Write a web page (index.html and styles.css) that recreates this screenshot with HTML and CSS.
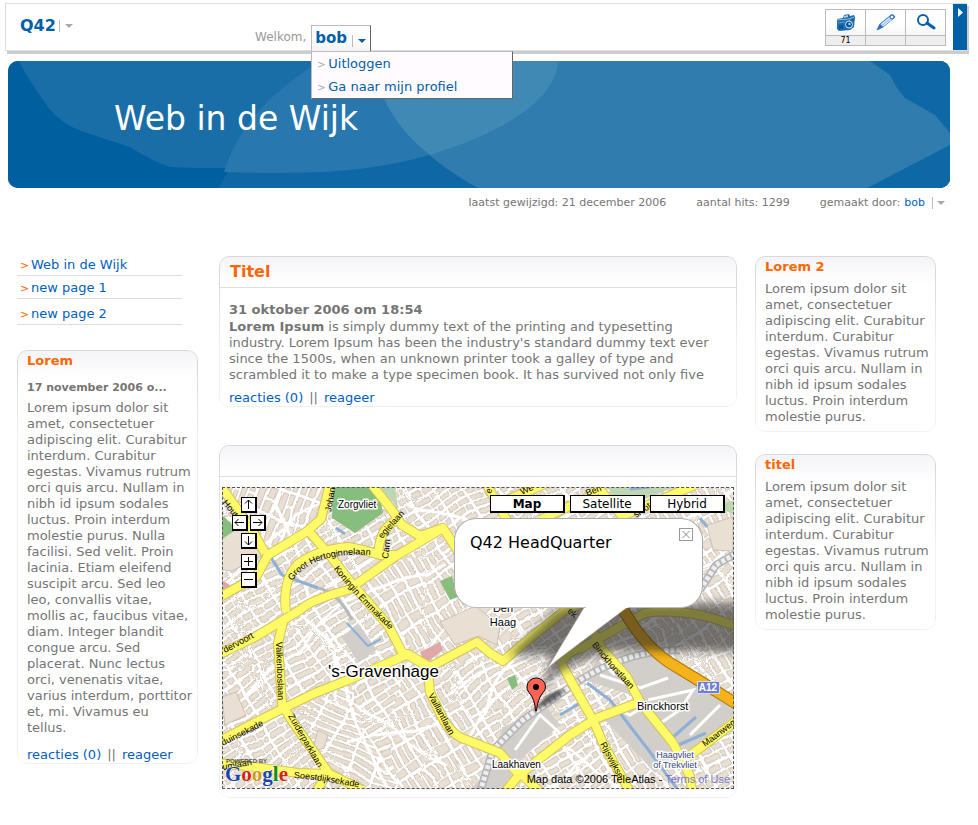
FILE: index.html
```html
<!DOCTYPE html>
<html lang="nl">
<head>
<meta charset="utf-8">
<title>Web in de Wijk</title>
<link rel="stylesheet" href="styles.css">
</head>
<body>
<header class="topbar">
  <div class="brand"><a href="#">Q42</a><span class="sep"></span><i class="caret"></i></div>
  <div class="welcome">
    <span class="hello">Welkom,</span>
    <div class="user">
      <button class="user-tab" type="button">bob<span class="sep"></span><i class="caret blue"></i></button>
      <ul class="user-menu">
        <li><a href="#">Uitloggen</a></li>
        <li><a href="#">Ga naar mijn profiel</a></li>
      </ul>
    </div>
  </div>
  <div class="tools">
    <button class="tool" type="button" aria-label="Foto's">
      <svg width="20" height="18" viewBox="0 0 20 18"><path d="M1 5l6-1 1-3 5-1 1 2 4-1 1 2-1 10-4 3-11 1-2-2z" fill="#1d6cae"/><path d="M1 6l12-1 5-2" stroke="#8fc0e8" fill="none"/><path d="M2 9l7-1M13 5l1 3" stroke="#5d9fd6" fill="none"/><path d="M8 2l4-1v2l-4 1z" fill="#a9cdea"/><path d="M3 11h4v4H3z" fill="#0b559c"/><circle cx="13" cy="10.500" r="3.500" fill="#0b559c" stroke="#d5e8f8"/><circle cx="13.500" cy="10" r="1.200" fill="#b5d7f2"/></svg>
      <span>71</span>
    </button>
    <button class="tool" type="button" aria-label="Bewerken">
      <svg width="20" height="18" viewBox="0 0 20 18"><path d="M1 16l3-6L15 1q3-1 4 2L7 13z" fill="#a9cbf5" stroke="#3b7cc4"/><path d="M1 16l3-6 3 3z" fill="#2b6fb8"/><path d="M6 10l9-7M7 12l9-7" stroke="#e8f2ff"/><circle cx="16" cy="3" r="2" fill="#fff" stroke="#0b60b0"/></svg>
      <span></span>
    </button>
    <button class="tool" type="button" aria-label="Zoeken">
      <svg width="20" height="18" viewBox="0 0 20 18"><circle cx="7" cy="6" r="5" fill="#fff" stroke="#0b5fae" stroke-width="2"/><path d="M11 9l7 5" stroke="#0b5fae" stroke-width="3" stroke-linecap="round"/></svg>
      <span></span>
    </button>
  </div>
  <button class="collapse" type="button" aria-label="Inklappen"><svg width="5" height="9" viewBox="0 0 5 9"><path d="M0 0l5 4.500-5 4.500z" fill="#fff"/></svg></button>
</header>

<section class="hero">
  <svg class="hero-art" viewBox="8 61 942 127" preserveAspectRatio="none" aria-hidden="true">
    <path fill="#005f9f" d="M8 61H950V188H8z"/>
    <path fill="#0f68a6" d="M218 188L232 165 500 61H950V188z"/>
    <path fill="#1a6ea7" d="M19 61C26 75 38 93 48 107Q62 125 84 132Q105 139 130 147Q150 160 170 167L195 168 232 168 420 61z"/>
    <path fill="#2877ae" d="M224 172C236 133 262 98 320 61H558C558 88 520 118 430 155C370 171 325 175 224 172z"/>
    <path fill="#307cae" d="M374 61C378 110 418 155 478 188H867L950 145V133L935 115 905 98 897 88 890 75 870 61z"/>
    <path fill="#4189b5" d="M374 61C377 95 397 130 430 155C508 131 556 98 558 61z"/>
  </svg>
  <h1>Web in de Wijk</h1>
</section>
<div class="meta">
  <span>laatst gewijzigd: 21 december 2006</span>
  <span>aantal hits: 1299</span>
  <span class="author">gemaakt door: <a href="#">bob</a><span class="sep"></span><i class="caret"></i></span>
</div>

<main class="columns">
  <aside class="side">
    <nav class="pages">
      <a href="#">Web in de Wijk</a>
      <a href="#">new page 1</a>
      <a href="#" class="roomy">new page 2</a>
    </nav>
    <article class="card">
      <h2>Lorem</h2>
      <h3 class="date">17 november 2006 o...</h3>
      <p>Lorem ipsum dolor sit amet, consectetuer adipiscing elit. Curabitur interdum. Curabitur egestas. Vivamus rutrum orci quis arcu. Nullam in nibh id ipsum sodales luctus. Proin interdum molestie purus. Nulla facilisi. Sed velit. Proin lacinia. Etiam eleifend suscipit arcu. Sed leo<br>leo, convallis vitae,<br>mollis ac, faucibus vitae,<br>diam. Integer blandit<br>congue arcu. Sed<br>placerat. Nunc lectus<br>orci, venenatis vitae,<br>varius interdum, porttitor<br>et, mi. Vivamus eu<br>tellus.</p>
      <div class="links"><a href="#">reacties (0)</a><span>||</span><a href="#">reageer</a></div>
    </article>
  </aside>

  <div class="center">
    <article class="card wide">
      <h2>Titel</h2>
      <h3>31 oktober 2006 om 18:54</h3>
      <p><b>Lorem Ipsum</b> is simply dummy text of the printing and typesetting industry. Lorem Ipsum has been the industry's standard dummy text ever since the 1500s, when an unknown printer took a galley of type and scrambled it to make a type specimen book. It has survived not only five</p>
      <div class="links"><a href="#">reacties (0)</a><span>||</span><a href="#">reageer</a></div>
    </article>

    <article class="card wide map-card">
      <h2></h2>
      <div class="map">
        <svg class="map-art" viewBox="222 487 512 302" preserveAspectRatio="xMidYMid slice">
          <defs>
            <pattern id="pa" width="27" height="17" patternUnits="userSpaceOnUse" patternTransform="rotate(-32)">
              <path fill="#fff" d="M0 0h27v17H0z"/><path fill="#e9dfd3" stroke="#c8bdae" stroke-width=".8" d="M1.500 1.500h10v5h-10zM14 1.500h10.500v5h-10.500zM1.500 9.500h15.500v5h-15.500zM19.500 9.500h5v5h-5z"/>
            </pattern>
            <pattern id="pb" width="17" height="30" patternUnits="userSpaceOnUse" patternTransform="rotate(20)">
              <path fill="#fff" d="M0 0h17v30H0z"/><path fill="#e9dfd3" stroke="#c8bdae" stroke-width=".8" d="M1.500 1.500h5v26h-5zM9.500 1.500h5v11h-5zM9.500 16h5v11.500h-5z"/>
            </pattern>
            <pattern id="pc" width="31" height="16" patternUnits="userSpaceOnUse" patternTransform="rotate(58)">
              <path fill="#fff" d="M0 0h31v16H0z"/><path fill="#e9dfd3" stroke="#c8bdae" stroke-width=".8" d="M1.500 1.500h17v4h-17zM21 1.500h7.500v12h-7.500zM1.500 8.500h17v5h-17z"/>
            </pattern>
            <pattern id="pd" width="25" height="14" patternUnits="userSpaceOnUse" patternTransform="rotate(24)">
              <path fill="#fff" d="M0 0h25v14H0z"/><path fill="#e9dfd3" stroke="#c8bdae" stroke-width=".8" d="M1.500 1.500h21v4h-21zM1.500 8.500h21v3.500h-21z"/>
            </pattern>
            <filter id="warp" x="0" y="0" width="1" height="1"><feTurbulence baseFrequency=".014" numOctaves="1" seed="5"/><feDisplacementMap in="SourceGraphic" scale="14" xChannelSelector="R" yChannelSelector="G"/></filter>
            <filter id="soft" x="-20%" y="-50%" width="140%" height="200%"><feGaussianBlur stdDeviation="4"/></filter>
            <filter id="soft2" x="-50%" y="-50%" width="200%" height="200%"><feGaussianBlur stdDeviation="1.500"/></filter>
            <g id="roads">
              <path d="M222 488L238 510 252 530 265 553"/>
              <path d="M218 598L256 577 268 555 306 532 321 519 331 480"/>
              <path d="M307 529L332 558 352 584 388 625 402 652 427 666"/>
              <path d="M286 612Q282 580 298 564Q318 549 348 547Q362 549 380 555H396"/>
              <path d="M218 655L255 637 300 610Q310 600 348 590L396 556 423 540 443 528 456 548 470 580"/>
              <path d="M368 480L392 510 402 525 420 536 443 528"/><path d="M398 520Q380 526 378 555"/>
              <path d="M484 480L508 522"/><path d="M495 505L545 484"/><path d="M540 520L593 495 600 480"/><path d="M598 487L622 516 695 485"/>
              <path d="M284 618L278 643 282 704 290 718 328 772 316 792"/>
              <path d="M218 742L252 724 284 708 315 693 348 680 395 660 408 654 430 667 477 642 490 653 503 661 533 636 564 611 588 601"/>
              <path d="M218 763L255 767 298 773 330 774 362 790"/>
              <path d="M427 663L430 692 440 713Q450 735 467 740L500 753 519 775 570 735 597 718 640 702"/>
              <path d="M519 775L505 792"/><path d="M519 772L540 792"/>
              <path d="M560 665Q567 650 582 648L612 631 645 613Q690 607 738 627"/>
              <path d="M562 665L593 720 603 743 630 792"/>
              <path d="M592 630L603 650 627 677 640 702 673 743 690 776 692 790"/><path d="M684 760L740 718"/>
            </g>
            <path id="groot" d="M292 581Q308 558 348 555Q365 553 395 559"/>
            <path id="emma" d="M334 569Q350 591 395 635"/>
            <path id="soest" d="M294 778Q325 780 370 790"/>
            <path id="binck" d="M592 645Q606 665 640 699"/>
          </defs>
          <g filter="url(#warp)">
            <path fill="url(#pa)" d="M200 465H760V810H200z"/>
            <path fill="url(#pb)" d="M265 475H325L318 525 265 548 222 480z"/>
            <path fill="url(#pc)" d="M455 545L520 655 427 665 352 583 400 555z"/>
            <path fill="url(#pc)" d="M430 665L500 755 515 800H395L380 725 400 660z"/>
            <path fill="url(#pd)" d="M290 700L345 682 360 730 395 790H345z"/>
            <path fill="url(#pc)" d="M650 475H755V700L640 635zM600 720L640 720 675 790H625z"/>
            <path fill="none" stroke="#fff" stroke-width="3" d="M222 580L290 510 330 490M240 690L300 640 340 600 440 560M325 630L350 720 385 790M300 610L330 640 330 700M400 660L470 600 540 570M440 690L540 640M460 735L520 640 500 590M350 700L440 760M340 740L430 720M640 540L734 480M650 590L734 540M560 740L620 790M540 790L585 745M400 500L480 520M270 500L300 560"/>
          </g>
          <path fill="#eadfd3" stroke="#c4b8a8" stroke-width=".8" d="M222 537L240 528 262 555 232 571 222 570zM222 697L236 692 246 715 225 725zM440 622L475 606 500 625 497 645 478 636 455 645zM707 525L733 517 733 551 713 550zM318 730L328 735 324 748 312 752z"/>
          <path fill="#d2cfca" d="M342 637L358 623 377 650 358 662zM502 728L545 705 560 725 520 760 495 757zM585 680L600 655 650 650 700 684 734 705V715L690 753 672 740 640 698zM605 720L640 706 675 755 655 773zM470 790L500 757 512 775 500 790z"/>
          <path fill="none" stroke="#fff" stroke-width="3" d="M600 675L640 688 668 678M613 707L630 715 645 706M648 700L693 690 680 710 662 722M690 735L720 705M515 750L540 715 560 733M600 660L615 675"/>
          <path fill="#87bd7d" d="M333 487H378L383 513 355 533 332 518zM222 515L237 529 222 539zM440 581L452 576 458 597 450 600zM507 678L515 675 518 685 512 690z"/>
          <path fill="#bfd6b2" d="M380 487H395L398 508zM607 487H675L635 503 622 509zM713 507L734 500 734 514z"/>
          <path fill="#dea8a8" d="M420 652L440 642 443 650 425 664zM222 580L230 585 224 595z"/>
          <g fill="none" stroke="#8eb0d7" stroke-width="3"><path d="M270 556L282 575 318 588"/><path stroke="#b5b9bd" d="M318 588Q338 592 352 620"/><path stroke-width="2" d="M347 623L368 646 381 639"/><path d="M587 683L610 700 650 752 678 790"/><path d="M560 715L582 702M672 738L696 717M676 746L706 733M336 528L345 534M630 489L650 487M700 518L707 527"/></g>
          <path fill="none" stroke="#b7b6b7" stroke-width="8" d="M480 792L493 750 523 720 580 680Q630 650 680 650M700 590L716 565 737 553"/>
          <path fill="none" stroke="#eee" stroke-width="5" stroke-dasharray="4 2" d="M480 792L493 750 523 720 580 680Q630 650 680 650M700 590L716 565 737 553"/>
          <g fill="none" stroke-linejoin="round"><use href="#roads" stroke="#d1c45c" stroke-width="10"/><use href="#roads" stroke="#fffa67" stroke-width="8"/></g>
          <path fill="none" stroke="#a9770c" stroke-width="12" d="M618 600Q640 643 670 663L703 683 740 706"/>
          <path fill="none" stroke="#f5b21b" stroke-width="10" d="M618 600Q640 643 670 663L703 683 740 706"/>
          <g class="road-label">
            <text transform="translate(222 503) rotate(50)">Houtrust</text><text transform="translate(331 512) rotate(-80)">Johan</text>
            <text transform="translate(491 494) rotate(-75)">e</text><text transform="translate(522 495) rotate(-25)">We</text><text transform="translate(587 496) rotate(-20)">Ben</text><text transform="translate(636 518) rotate(-35)">sloot</text>
            <text><textPath href="#groot">Groot Hertoginnelaan</textPath></text>
            <text><textPath href="#emma">Koningin Emmakade</textPath></text>
            <text transform="translate(388 559) rotate(-83)">Carn</text><text transform="translate(382 539) rotate(-48)">egielaan</text>
            <text transform="translate(225 653) rotate(-28)">dervoort</text><text transform="translate(276 642) rotate(88)">Valkenboslaan</text>
            <text transform="translate(223 746) rotate(-27)">duinsekade</text><text transform="translate(288 716) rotate(60)">Zuiderparklaan</text>
            <text><textPath href="#soest">Soestdijksekade</textPath></text><text transform="translate(223 770) rotate(-10)">umlaan</text>
            <text transform="translate(428 695) rotate(62)">Vaillantlaan</text><text><textPath href="#binck">Binckhorstlaan</textPath></text>
            <text transform="translate(600 744) rotate(62)">Rijswijkse</text><text transform="translate(705 747) rotate(-37)">Maanweg</text>
            <text transform="translate(567 612) rotate(40)">ek</text>
          </g>
          <path filter="url(#soft)" fill="#222" fill-opacity=".58" d="M508 656L555 611Q575 601 600 603H745V652Q650 650 612 651Q580 660 560 672L540 690 553 655z"/>
          <path filter="url(#soft2)" fill="#222" fill-opacity=".65" d="M536 709L545 697Q555 689 565 690Q556 703 536 709z"/>
          <g class="place-label">
            <text x="338" y="508">Zorgvliet</text><text class="city" x="328" y="677">'s-Gravenhage</text>
            <text class="town" x="503" y="612" text-anchor="middle">Den</text><text class="town" x="503" y="626" text-anchor="middle">Haag</text>
            <text x="492" y="768">Laakhaven</text><text class="town" x="637" y="710">Binckhorst</text>
            <text class="water" x="675" y="758" text-anchor="middle">Haagvliet</text><text class="water" x="675" y="768" text-anchor="middle">of Trekvliet</text>
          </g>
          <path fill="#6f7fd1" stroke="#d5daf5" d="M697.500 681.500h22v12h-22z"/><text class="shield" x="708" y="691" text-anchor="middle">A12</text>
          <path fill="#fff" stroke="#999" stroke-width=".6" d="M585 606L550 664 545 670 560 658 629 606z"/>
          <path fill="#ff6358" stroke="#000" d="M536.500 711h-1Q535 699 529 692.500Q526.500 690 527 686A9.300 9 0 0 1 545.500 686Q546 690 543 692.500Q537.500 699 536.500 711z"/><circle cx="536" cy="687" r="3"/>
          <text class="powered" x="226" y="763">POWERED BY</text>
          <text class="logo" x="225" y="781"><tspan fill="#1645ae">G</tspan><tspan fill="#d62408">o</tspan><tspan fill="#c79f0c">o</tspan><tspan fill="#1645ae">g</tspan><tspan fill="#188a1b">l</tspan><tspan fill="#d62408">e</tspan></text>
        </svg>
        <div class="nav-pad">
          <button type="button" class="up" aria-label="Omhoog"><svg viewBox="0 0 13 13"><path d="M6.500 11V2M3 5.500L6.500 2 10 5.500"/></svg></button>
          <button type="button" class="left" aria-label="Links"><svg viewBox="0 0 13 13"><path d="M11 6.500H2M5.500 3L2 6.500 5.500 10"/></svg></button>
          <button type="button" class="right" aria-label="Rechts"><svg viewBox="0 0 13 13"><path d="M2 6.500h9M7.500 3L11 6.500 7.500 10"/></svg></button>
          <button type="button" class="down" aria-label="Omlaag"><svg viewBox="0 0 13 13"><path d="M6.500 2v9M3 7.500L6.500 11 10 7.500"/></svg></button>
          <button type="button" class="in" aria-label="Inzoomen"><svg viewBox="0 0 13 13"><path d="M6.500 2v9M2 6.500h9"/></svg></button>
          <button type="button" class="out" aria-label="Uitzoomen"><svg viewBox="0 0 13 13"><path d="M2 6.500h9"/></svg></button>
        </div>
        <div class="map-types"><button type="button" class="on">Map</button><button type="button">Satellite</button><button type="button">Hybrid</button></div>
        <div class="bubble">Q42 HeadQuarter<button type="button" aria-label="Sluiten"><svg viewBox="0 0 11 11"><path d="M2 2l7 7M9 2L2 9"/></svg></button></div>
        <div class="credit">Map data ©2006 TeleAtlas - <a href="#">Terms of Use</a></div>
      </div>
    </article>
  </div>

  <aside class="side right-side">
    <article class="card">
      <h2>Lorem 2</h2>
      <p>Lorem ipsum dolor sit amet, consectetuer adipiscing elit. Curabitur interdum. Curabitur egestas. Vivamus rutrum orci quis arcu. Nullam in nibh id ipsum sodales luctus. Proin interdum molestie purus.</p>
    </article>
    <article class="card">
      <h2>titel</h2>
      <p>Lorem ipsum dolor sit amet, consectetuer adipiscing elit. Curabitur interdum. Curabitur egestas. Vivamus rutrum orci quis arcu. Nullam in nibh id ipsum sodales luctus. Proin interdum molestie purus.</p>
    </article>
  </aside>
</main>
</body>
</html>
```
FILE: styles.css
```css
* { box-sizing: border-box; }
body { margin: 0; padding-top: 3px; background: #fff; color: #757575; font: 13px/16px "DejaVu Sans", Verdana, sans-serif; }
a { color: #0060c0; text-decoration: none; }
button { font: inherit; padding: 0; margin: 0; border: 0; background: none; cursor: pointer; }
h1, h2, h3, p, ul { margin: 0; padding: 0; }
svg { display: block; }

.sep { display: inline-block; width: 1px; height: 12px; background: #bbb; }
.caret { display: inline-block; border: 4px solid transparent; border-top-color: #aaa; border-bottom: 0; }
.caret.blue { border-top-color: #0060a8; }

.topbar { display: flex; align-items: flex-start; height: 48px; margin: 0 11px 0 5px; border: 1px solid #ddd; border-right: 0; box-shadow: 2px 3px 0 #ccc; background: #fff; }
.brand { display: flex; align-items: center; gap: 5px; width: 249px; padding: 12px 0 0 14px; font-size: 16px; line-height: 20px; font-weight: bold; }
.brand a, .user-tab { color: #0060a8; }
.brand .sep { margin-left: -2px; }
.welcome { display: flex; gap: 5px; padding-top: 21px; flex: 1; }
.hello { padding-top: 4px; color: #999; font-size: 12px; }
.user { position: relative; }
.user-tab { display: flex; align-items: center; gap: 5px; height: 27px; width: 60px; padding: 0 3px 2px; border: 1px solid #bbb; border-right-color: #666; border-bottom: 0; background: linear-gradient(#fff 50%, #f2f2f2); font-size: 15px; font-weight: bold; }
.user-tab .sep { margin-top: 5px; }
.user-tab .caret { margin-top: 5px; }
.user-menu { position: absolute; z-index: 5; left: 0; top: 26px; width: 202px; height: 48px; list-style: none; background: #fffbff; border: 1px solid #bbb; border-right-color: #666; border-bottom-color: #666; }
.user-menu li { height: 23px; padding-left: 5px; line-height: 23px; }
.user-menu li::before { content: ">"; display: inline-block; width: 11px; color: #aaa; font-size: 10px; }
.user-menu a { color: #0060a8; }
.tools { display: flex; margin: 5px 7px 0 0; border: 1px solid #bbb; }
.tool { display: flex; flex-direction: column; align-items: center; justify-content: space-between; width: 40px; height: 35px; padding-top: 5px; border-right: 1px solid #bbb; background: linear-gradient(#fff 40%, #eee); color: #000; }
.tool:last-child { width: 39px; border-right: 0; }
.tool span { width: 100%; height: 10px; border-top: 1px solid #bbb; background: #eee; font: 8px/10px "DejaVu Sans", sans-serif; }
.tool svg { margin-top: -1px; }
.collapse { display: flex; justify-content: center; width: 14px; height: 46px; padding-top: 4px; background: #0060a8; }

.hero { position: relative; height: 127px; margin: 10px 28px 0 8px; padding: 35px 0 0 106px; border-radius: 10px; overflow: hidden; background: #005f9f; }
.hero-art { position: absolute; inset: 0; width: 100%; height: 100%; }
.hero h1 { position: relative; color: #fff; font-size: 33px; line-height: 46px; font-weight: normal; }
.meta { display: flex; justify-content: flex-end; gap: 30px; padding: 7px 33px 0 0; font-size: 11px; }
.author { display: flex; align-items: center; gap: 4px; }
.author .sep { margin-left: 3px; }

.columns { display: grid; grid-template-columns: 181px minmax(0, 1fr) 181px; align-items: start; gap: 0 18px; margin: 45px 42px 0 17px; }
.center { display: grid; gap: 38px; padding-left: 3px; }
.right-side { display: grid; gap: 22px; }
.pages { width: 165px; margin: -3px 0 25px; }
.pages a { display: block; height: 23px; padding-left: 3px; border-bottom: 1px solid #ddd; line-height: 23px; }
.pages a.roomy { height: 26px; line-height: 30px; }
.pages a::before { content: ">"; display: inline-block; width: 11px; color: #f60; font-size: 11px; }

.card { position: relative; padding: 1px 3px 7px 10px; border-radius: 10px; background: linear-gradient(#f4f4f8, #fff 28px); }
.card::before { content: ""; position: absolute; inset: 0; border: 1px solid #d8d8dc; border-radius: 10px; pointer-events: none; -webkit-mask-image: linear-gradient(#000 20px, rgba(0,0,0,.35) 90px); mask-image: linear-gradient(#000 20px, rgba(0,0,0,.35) 90px); }
.card h2 { color: #f60; font-size: 13px; line-height: 20px; margin-bottom: 4px; }
.card h3 { margin-bottom: 1px; font-size: 13px; line-height: 17px; }
.card .date { margin: 9px 0 4px; font-size: 11px; line-height: 16px; white-space: nowrap; }
.card .links { display: flex; gap: 6px; margin-top: 11px; margin-bottom: -6px; }
.card.wide { padding: 0 10px 7px; }
.card.wide h2 { height: 32px; margin: 0 -10px 13px; padding-left: 11px; border-bottom: 1px solid #e0e0e4; font-size: 16px; line-height: 31px; }
.card.wide .links { margin-top: 7px; }
.card.map-card { padding: 0 3px 9px; }
.card.map-card h2 { margin: 0 -3px 10px; }

.map { position: relative; height: 302px; overflow: hidden; color: #000; }
.map::after { content: ""; position: absolute; inset: 0; border: 1px dashed #555; pointer-events: none; }
.map-art { width: 100%; height: 100%; font-family: "Liberation Sans", Arial, sans-serif; }
.road-label { font-size: 9px; }
.place-label { font-size: 10px; stroke: #fff; stroke-width: 3px; stroke-linejoin: round; paint-order: stroke; fill: #000; }
.place-label .city { font-size: 17px; }
.place-label .town { font-size: 11px; }
.place-label .water { font-size: 9px; fill: #35457c; }
.shield { font-size: 10px; font-weight: bold; fill: #fff; }
.powered { font-size: 6px; font-weight: bold; fill: #555; }
.logo { font: bold 21px "Liberation Serif", serif; stroke: #fff; stroke-width: 1px; paint-order: stroke; }
.nav-pad { position: absolute; left: 10px; top: 10px; display: grid; grid-template-columns: repeat(4, 9px); grid-template-rows: 18px 18px 21px 18px 18px; }
.nav-pad button { grid-column: 2 / span 2; width: 16px; height: 16px; border: 1px solid #000; border-right-width: 2px; border-bottom-width: 2px; background: #fff; }
.nav-pad .left { grid-area: 2 / 1 / auto / span 2; }
.nav-pad .right { grid-area: 2 / 3 / auto / span 2; }
.nav-pad .down { grid-row: 3; }
.nav-pad .in { grid-row: 4; }
.nav-pad .out { grid-row: 5; }
.nav-pad svg, .bubble svg { width: 100%; height: 100%; fill: none; stroke: #000; }
.map-types { position: absolute; right: 9px; top: 8px; display: flex; gap: 5px; }
.map-types button { width: 75px; height: 18px; border: 1px solid #000; border-right-width: 2px; border-bottom-width: 2px; background: #fff; font-size: 12px; line-height: 16px; color: #000; }
.map-types .on { font-weight: bold; }
.bubble { position: absolute; left: calc(50% - 24px); top: 31px; width: 249px; height: 90px; padding: 14px 15px; border: 1px solid #aaa; border-bottom-color: #bbb; border-radius: 22px; background: #fff; font-size: 16px; line-height: 20px; }
.bubble::after { content: ""; position: absolute; left: 131px; bottom: -1px; width: 42px; height: 1px; background: #fff; }
.bubble button { position: absolute; right: 9px; top: 9px; width: 14px; height: 13px; border: 1px solid #999; }
.bubble svg { stroke: #888; }
.credit { position: absolute; right: 4px; bottom: 2px; font: 11px/16px "Liberation Sans", Arial, sans-serif; }
.credit a { color: #77c; }
```
